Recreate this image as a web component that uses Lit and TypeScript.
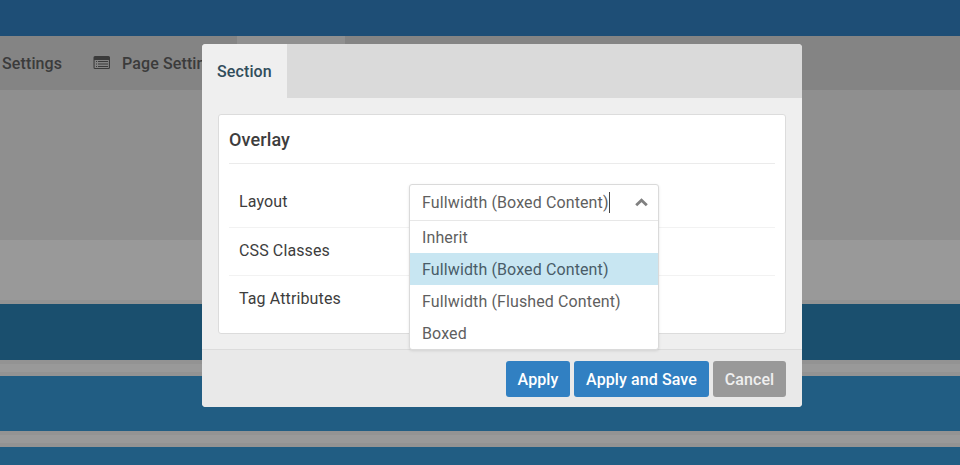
import { LitElement, html, css } from "lit";
import { customElement, property, state } from "lit/decorators.js";
import { classMap } from "lit/directives/class-map.js";

@customElement("select-box")
class SelectBox extends LitElement {
  @property({ type: Array }) options: string[] = [];
  @property() value = "";

  static styles = css`
    :host { display: block; position: relative; width: 250px; height: 37px; }
    .box {
      position: absolute; z-index: 2; top: 0; left: 0; width: 250px; box-sizing: border-box;
      border: 1px solid #dadada; border-radius: 3px; background: #fff; color: #5f5f5f;
      box-shadow: 0 1px 3px rgba(0, 0, 0, 0.1);
    }
    .current {
      display: flex; align-items: center; height: 35px; padding: 0 10px 0 12px;
      border-bottom: 1px solid #e7e7e7;
    }
    .caret { width: 1px; height: 21px; background: #444; }
    .arrow { margin-left: auto; display: block; }
    .option { height: 32px; line-height: 34px; padding: 0 12px; box-sizing: border-box; }
    .option.active { background: #c8e6f2; color: #495c68; }
    .option:last-child { border-radius: 0 0 3px 3px; }
  `;

  render() {
    return html`<div class="box">
      <div class="current">
        <span>${this.value}</span><span class="caret"></span>
        <svg class="arrow" width="13" height="9" viewBox="0 0 13 9">
          <path d="M1.2 7.3 6.5 2.2l5.3 5.1" fill="none" stroke="#808080" stroke-width="2.8" />
        </svg>
      </div>
      ${this.options.map(
        (o) => html`<div class=${classMap({ option: true, active: o === this.value })}
          @click=${() => (this.value = o)}>${o}</div>`
      )}
    </div>`;
  }
}

@customElement("app-root")
class AppRoot extends LitElement {
  @state() private layouts = [
    "Inherit",
    "Fullwidth (Boxed Content)",
    "Fullwidth (Flushed Content)",
    "Boxed",
  ];

  static styles = css`
    :host {
      display: block; position: relative; width: 960px; height: 465px; overflow: hidden;
      background: #999; font: 400 16px Roboto, "Liberation Sans", sans-serif; color: #3d3d3d;
      letter-spacing: 0.12px;
    }
    .topbar { height: 36px; background: #1e4e76; }
    .nav { display: flex; height: 54px; background: #848484; font-weight: 500; color: #3b3b3b; }
    .link { display: flex; align-items: center; box-sizing: border-box; white-space: nowrap; }
    .link.first { width: 78px; padding-left: 2px; }
    .link.page { width: 159px; padding-left: 15px; }
    .link.page svg { margin-right: 11px; }
    .link.open { width: 108px; background: #909090; }
    .band { height: 150px; background: #8f8f8f; }
    .space { height: 60px; }
    .edge { height: 4px; background: #939393; }
    .gap { height: 16px; box-sizing: border-box; border: solid #939393; border-width: 4px 0; background: #999; }
    .row { height: 55px; background: #215d83; }
    .row.dark { height: 56px; background: #1a4f6e; }
    .modal {
      position: absolute; left: 202px; top: 44px; width: 600px; height: 363px;
      display: flex; flex-direction: column; background: #efefef; border-radius: 4px;
    }
    .tabs { height: 54px; background: #dadada; border-radius: 4px 4px 0 0; display: flex; }
    .tab {
      width: 85px; box-sizing: border-box; padding-left: 15px; line-height: 56px; height: 54px;
      background: #efefef; border-radius: 4px 0 0 0; font-weight: 500; color: #314d5b;
    }
    .panel {
      box-sizing: border-box; height: 220px; margin: 16px 16px 15px; padding: 0 10px;
      background: #fff; border: 1px solid #dcdcdc; border-radius: 3px;
    }
    .title {
      margin: 0 0 15px; height: 48px; line-height: 49px; font-size: 18px; font-weight: 500;
      border-bottom: 1px solid #ebebeb;
    }
    .field {
      display: flex; align-items: flex-start; height: 47px; border-bottom: 1px solid #f2f2f2;
      padding-left: 10px;
    }
    .field.lead { height: 43px; padding-top: 5px; }
    .field:last-child { border-bottom: 0; }
    .label { width: 170px; line-height: 45px; }
    .lead .label { line-height: 35px; }
    .footer {
      flex: 1; box-sizing: border-box; border-top: 1px solid #dcdcdc; background: #e9e9e9;
      border-radius: 0 0 4px 4px; display: flex; justify-content: flex-end; gap: 4px; padding: 11px 16px 0 0;
    }
    .btn {
      font: 500 16px Roboto, "Liberation Sans", sans-serif; border: 0; padding: 0; height: 36px;
      border-radius: 3px; background: #3180c2; color: #fff; letter-spacing: 0.1px;
    }
    .apply { width: 64px; }
    .save { width: 135px; }
    .cancel { width: 73px; background: #999; color: #efefef; }
  `;

  render() {
    return html`
      <div class="topbar"></div>
      <div class="nav">
        <div class="link first">Settings</div>
        <div class="link page">
          <svg width="18" height="14" viewBox="0 0 18 14" fill="#3b3b3b">
            <path fill-rule="evenodd" d="M2 0H15.5Q17 0 17 1.5V11.5Q17 13 15.5 13H2Q.5 13 .5 11.5V1.5Q.5 0 2 0ZM1.6 4V11.5Q1.6 12 2 12H15.5Q15.9 12 15.9 11.5V4Z" />
            <path d="M3 5h1v1H3zM5 5h10v1H5zM3 7.5h1v1H3zM5 7.5h10v1H5zM3 10h1v1H3zM5 10h10v1H5z" />
          </svg>
          <span>Page Settings</span>
        </div>
        <div class="link open"></div>
      </div>
      <div class="band"></div>
      <div class="space"></div>
      <div class="edge"></div>
      <div class="row dark"></div>
      <div class="gap"></div>
      <div class="row"></div>
      <div class="gap"></div>
      <div class="row"></div>

      <div class="modal">
        <div class="tabs"><div class="tab">Section</div></div>
        <div class="panel">
          <h3 class="title">Overlay</h3>
          <div class="field lead">
            <span class="label">Layout</span>
            <select-box .options=${this.layouts} .value=${this.layouts[1]}></select-box>
          </div>
          <div class="field"><span class="label">CSS Classes</span></div>
          <div class="field"><span class="label">Tag Attributes</span></div>
        </div>
        <div class="footer">
          <button class="btn apply">Apply</button>
          <button class="btn save">Apply and Save</button>
          <button class="btn cancel">Cancel</button>
        </div>
      </div>
    `;
  }
}
